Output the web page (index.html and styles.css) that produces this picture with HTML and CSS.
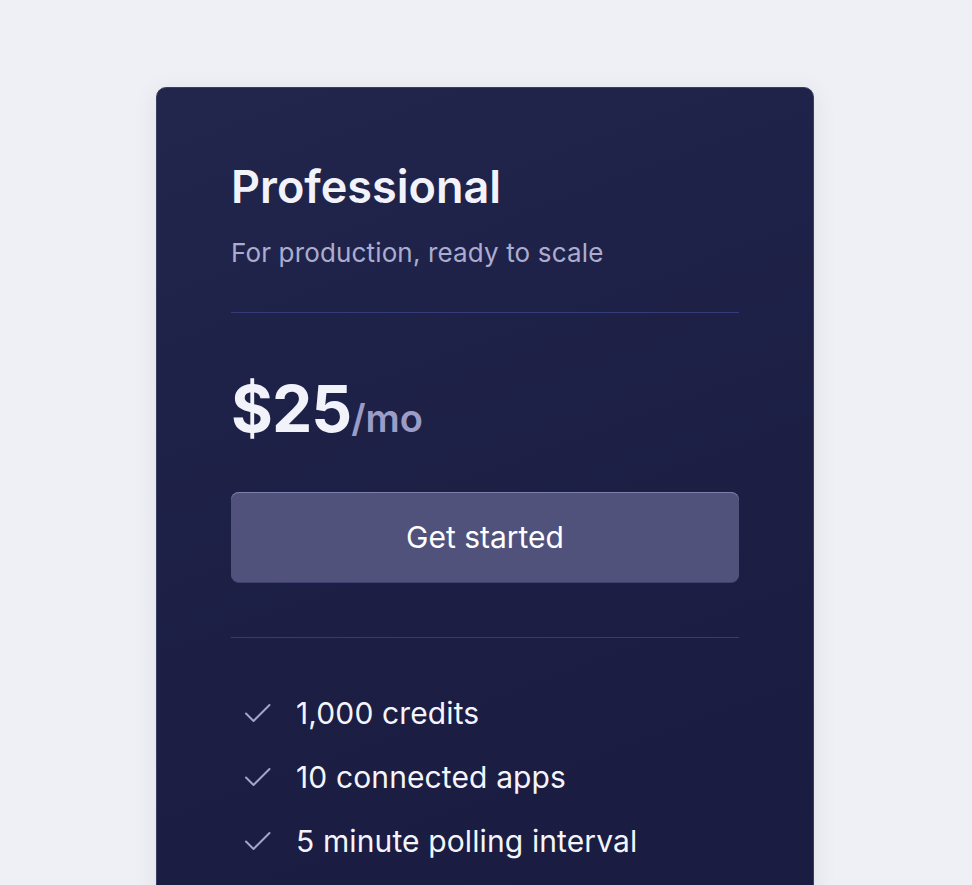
FILE: index.html
```html
<!DOCTYPE html>
<html lang="en">
<head>
    <meta charset="UTF-8">
    <meta name="viewport" content="width=device-width, initial-scale=1.0">
    <title>Pricing</title>
    <link rel="stylesheet" href="styles.css">
</head>
<body>
    <div class="card">
        <h2 class="plan-name">Professional</h2>
        <p class="plan-desc">For production, ready to scale</p>

        <div class="divider"></div>

        <div class="price">
            <span class="amount">$25</span><span class="period">/mo</span>
        </div>

        <button class="cta">Get started</button>

        <div class="divider"></div>

        <ul class="features">
            <li>
                <svg class="check" viewBox="0 0 28 24" width="28" height="24"><path d="M2 12.5 L9.5 20 L25.5 4" fill="none" stroke="currentColor" stroke-width="2" stroke-linecap="round" stroke-linejoin="round"/></svg>
                <span>1,000 credits</span>
            </li>
            <li>
                <svg class="check" viewBox="0 0 28 24" width="28" height="24"><path d="M2 12.5 L9.5 20 L25.5 4" fill="none" stroke="currentColor" stroke-width="2" stroke-linecap="round" stroke-linejoin="round"/></svg>
                <span>10 connected apps</span>
            </li>
            <li>
                <svg class="check" viewBox="0 0 28 24" width="28" height="24"><path d="M2 12.5 L9.5 20 L25.5 4" fill="none" stroke="currentColor" stroke-width="2" stroke-linecap="round" stroke-linejoin="round"/></svg>
                <span>5 minute polling interval</span>
            </li>
        </ul>
    </div>
</body>
</html>
```

FILE: styles.css
```css
body {
    font-family: Inter, "Noto Sans", sans-serif;
    background-color: #eff0f5;
    margin: 0;
    padding: 87px 0 0 156px;
    overflow: hidden;
}
.card {
    width: 508px;
    min-height: 900px;
    padding: 71px 74px 40px;
    background: linear-gradient(160deg, #22264c 0%, #1c1e44 50%, #191a3e 100%);
    border: 1px solid #3a3d66;
    border-radius: 10px;
    box-shadow: 0 4px 24px rgba(30, 32, 70, 0.08);
}
.plan-name {
    margin: 0;
    font-size: 45px;
    font-weight: 600;
    line-height: 56px;
    color: #f1f2fa;
}
.plan-desc {
    margin: 21px 0 0;
    font-size: 26px;
    line-height: 34px;
    letter-spacing: 0.15px;
    color: #abadd0;
}
.divider {
    height: 1px;
    background-color: #353a78;
    margin-top: 42px;
}
.price {
    margin-top: 56px;
    line-height: 80px;
}
.amount {
    font-size: 64px;
    font-weight: 700;
    color: #f1f2fa;
    letter-spacing: -1px;
}
.period {
    font-size: 38px;
    font-weight: 600;
    color: #9b9dc8;
}
.cta {
    display: block;
    width: 100%;
    height: 90px;
    margin-top: 26px;
    font-family: inherit;
    font-size: 30px;
    color: #ffffff;
    background-color: #50527c;
    border: none;
    border-radius: 8px;
    box-shadow: inset 0 1px 0 #7d80ab, 0 1px 0 #3e4070;
    cursor: pointer;
}
.cta + .divider {
    margin-top: 55px;
}
.features {
    list-style: none;
    margin: 43px 0 0;
    padding: 0;
}
.features li {
    display: flex;
    align-items: center;
    gap: 24px;
    height: 64px;
    font-size: 30px;
    letter-spacing: 0.12px;
    color: #f4f5fb;
}
.check {
    color: #a3a5cc;
    margin-left: 13px;
}
```
